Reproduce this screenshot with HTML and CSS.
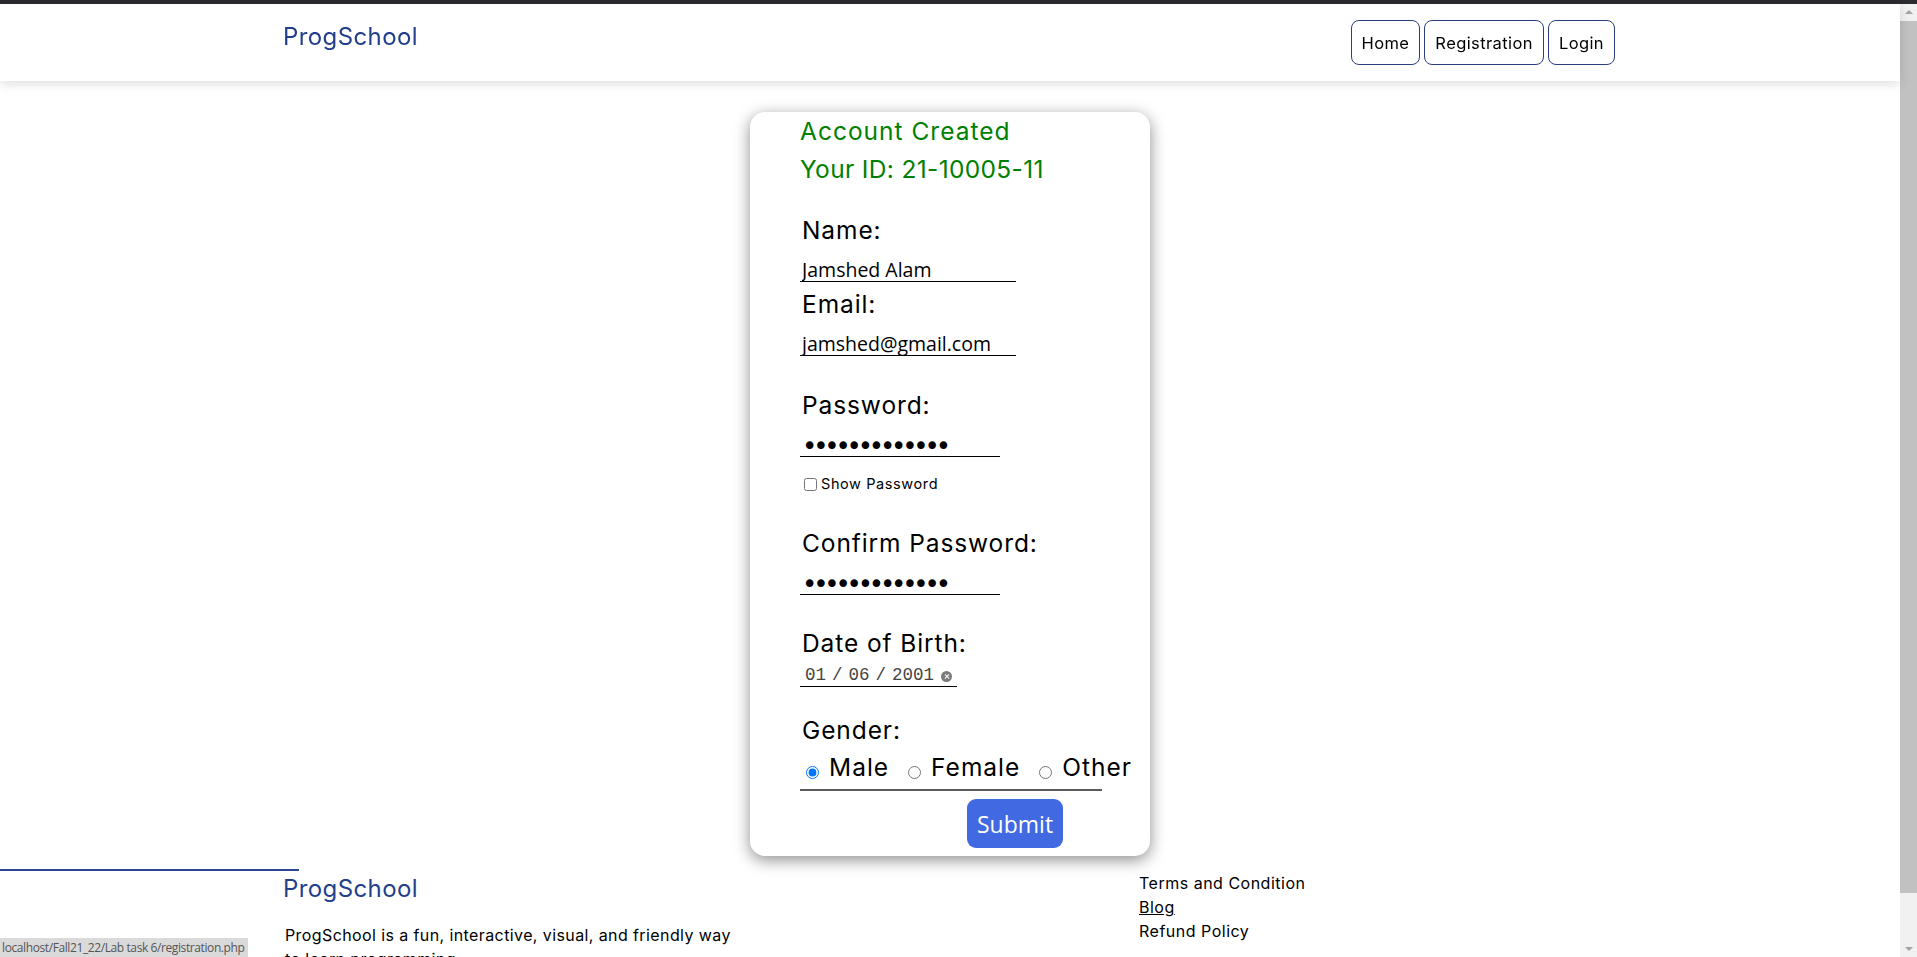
FILE: index.html
```html
<!DOCTYPE html>
<html lang="en">
<head>
<meta charset="utf-8">
<title>Registration - ProgSchool</title>
<link rel="stylesheet" href="styles.css">
</head>
<body>
<div class="frame-top"></div>
<div class="page">
  <header class="site-header">
    <div class="container header-inner">
      <div class="logo">ProgSchool</div>
      <nav class="nav">
        <a class="nav-btn" href="#">Home</a>
        <a class="nav-btn" href="#">Registration</a>
        <a class="nav-btn" href="#">Login</a>
      </nav>
    </div>
  </header>

  <main class="main">
    <form class="card">
      <div class="msg">Account Created</div>
      <div class="msg msg-id">Your ID: 21-10005-11</div>

      <label class="lbl lbl-first">Name:</label>
      <input class="txt" type="text" value="Jamshed Alam">

      <label class="lbl lbl-email">Email:</label>
      <input class="txt" type="text" value="jamshed@gmail.com">

      <label class="lbl lbl-gap">Password:</label>
      <input class="txt pwd" type="password" value="abcdefghijklm">

      <div class="show-row">
        <input class="chk" type="checkbox">
        <span>Show Password</span>
      </div>

      <label class="lbl lbl-gap">Confirm Password:</label>
      <input class="txt pwd" type="password" value="abcdefghijklm">

      <label class="lbl lbl-date">Date of Birth:</label>
      <div class="date">
        <span>01</span><span class="sep">/</span><span>06</span><span class="sep">/</span><span>2001</span>
        <span class="clear"></span>
      </div>

      <label class="lbl lbl-gender">Gender:</label>
      <div class="radio-row">
        <label class="opt"><input class="rad" type="radio" name="g" checked>Male</label>
        <label class="opt"><input class="rad" type="radio" name="g">Female</label>
        <label class="opt"><input class="rad" type="radio" name="g">Other</label>
      </div>

      <div class="submit-row">
        <button class="submit" type="button">Submit</button>
      </div>
    </form>
  </main>

  <div class="footer-rule"></div>
  <footer class="container footer">
    <div class="footer-left">
      <div class="footer-logo">ProgSchool</div>
      <p class="footer-text">ProgSchool is a fun, interactive, visual, and friendly way to learn programming</p>
    </div>
    <div class="footer-links">
      <a href="#">Terms and Condition</a>
      <a href="#" class="u">Blog</a>
      <a href="#">Refund Policy</a>
    </div>
  </footer>
</div>

<div class="scrollbar">
  <div class="sb-arrow sb-up"></div>
  <div class="sb-thumb"></div>
  <div class="sb-arrow sb-down"></div>
</div>
<div class="status">localhost/Fall21_22/Lab task 6/registration.php</div>
</body>
</html>
```
FILE: styles.css
```css
html, body {
  margin: 0;
  padding: 0;
  overflow: hidden;
  background: #fff;
}
body {
  font-family: "Inter", "Liberation Sans", sans-serif;
  color: #000;
}
.frame-top {
  height: 4px;
  background: #2a2b2e;
}
.page {
  width: 1900px;
}
.container {
  width: 70%;
  margin: 0 auto;
}

/* header */
.site-header {
  background: #fff;
  height: 77px;
  box-shadow: 0 3px 10px rgba(0, 0, 0, 0.13);
  position: relative;
  z-index: 1;
}
.header-inner {
  display: flex;
  justify-content: space-between;
  align-items: flex-start;
}
.logo {
  margin-top: 18px;
  margin-left: -2px;
  font-size: 24px;
  line-height: 30px;
  letter-spacing: 0.4px;
  color: #233f8c;
}
.nav {
  margin-top: 16px;
  display: flex;
  gap: 4px;
}
.nav-btn {
  display: flex;
  align-items: center;
  height: 43px;
  padding: 0 10px;
  border: 1px solid #2b3f7f;
  border-radius: 8px;
  color: #000;
  text-decoration: none;
  font-size: 16.5px;
  letter-spacing: 0.4px;
}

/* card */
.main {
  padding-top: 31px;
}
.card {
  width: 400px;
  box-sizing: border-box;
  margin: 0 auto;
  padding: 0 0 8px 50px;
  background: #fff;
  border-radius: 15px;
  box-shadow: 0 4px 16px rgba(0, 0, 0, 0.45);
}
.msg {
  font-size: 24.5px;
  line-height: 38px;
  letter-spacing: 1px;
  color: #008000;
}
.msg-id {
  letter-spacing: 0.35px;
}
.lbl {
  display: block;
  font-size: 24.5px;
  line-height: 30px;
  letter-spacing: 0.9px;
  padding-left: 2px;
}
.lbl-first { margin-top: 27px; }
.lbl-email { margin-top: 7px; }
.lbl-gap { margin-top: 34px; }
.lbl-date { margin-top: 33px; }
.lbl-gender { margin-top: 28px; }

.txt {
  display: block;
  box-sizing: content-box;
  width: 214px;
  height: 24px;
  margin: 0;
  padding: 12px 0 0 2px;
  border: none;
  border-bottom: 1px solid #000;
  outline: none;
  background: transparent;
  font-family: "Open Sans", "Noto Sans", sans-serif;
  font-size: 19.5px;
  color: #000;
}
.pwd {
  width: 198px;
  height: 21px;
  padding-top: 15px;
  font-family: "DejaVu Sans", sans-serif;
  font-size: 26px;
  letter-spacing: -4.2px;
}

.show-row {
  margin-top: 17px;
  height: 20px;
  display: flex;
  align-items: center;
  font-size: 14.5px;
  line-height: 20px;
  letter-spacing: 0.6px;
}
.chk {
  width: 13px;
  height: 13px;
  margin: 0 4px 0 4px;
}

.date {
  box-sizing: content-box;
  width: 152px;
  height: 22px;
  padding: 6px 0 0 5px;
  border-bottom: 1px solid #000;
  display: flex;
  align-items: center;
  font-family: "Liberation Mono", monospace;
  font-size: 17.5px;
  line-height: 22px;
  color: #444;
}
.sep {
  padding: 0 6px;
}
.clear {
  width: 11px;
  height: 11px;
  margin-left: 7px;
  margin-top: 3px;
  border-radius: 50%;
  background: #7b7b7b;
  position: relative;
}
.clear::before,
.clear::after {
  content: "";
  position: absolute;
  left: 2.5px;
  top: 5px;
  width: 6px;
  height: 1.3px;
  background: #fff;
  transform: rotate(45deg);
}
.clear::after {
  transform: rotate(-45deg);
}

.radio-row {
  margin-top: 6px;
  width: 302px;
  height: 32px;
  padding-bottom: 6px;
  border-bottom: 2px solid #5a5a5a;
  display: flex;
  white-space: nowrap;
  font-size: 24.5px;
  line-height: 32px;
  letter-spacing: 1px;
}
.opt {
  flex-shrink: 0;
  margin-right: 13px;
}
.rad {
  width: 13px;
  height: 13px;
  margin: 0 10px 0 6px;
  vertical-align: -3px;
}

.submit-row {
  margin-top: 8px;
  padding-left: 167px;
}
.submit {
  height: 49px;
  padding: 0 10px;
  border: none;
  border-radius: 9px;
  background: #4169e1;
  color: #fff;
  font-family: "Open Sans", "Noto Sans", sans-serif;
  font-size: 23px;
  cursor: pointer;
}

/* footer */
.footer-rule {
  margin-top: 13px;
  width: 299px;
  height: 2px;
  background: #2b4695;
}
.footer {
  display: grid;
  grid-template-columns: 854px auto;
}
.footer-logo {
  margin-top: 3px;
  margin-left: -2px;
  font-size: 24px;
  line-height: 30px;
  letter-spacing: 0.4px;
  color: #233f8c;
}
.footer-text {
  margin: 19px 0 0;
  width: 455px;
  font-size: 16px;
  line-height: 24px;
  letter-spacing: 0.4px;
}
.footer-links {
  display: flex;
  flex-direction: column;
  align-items: flex-start;
  font-size: 16px;
  line-height: 24px;
  letter-spacing: 0.5px;
}
.footer-links a {
  color: #000;
  text-decoration: none;
}
.footer-links a.u {
  text-decoration: underline;
}

/* browser chrome overlays */
.scrollbar {
  position: fixed;
  top: 4px;
  right: 0;
  bottom: 0;
  width: 17px;
  background: #f1f1f1;
}
.sb-thumb {
  position: absolute;
  top: 17px;
  left: 0;
  right: 0;
  height: 872px;
  background: #c1c1c1;
}
.sb-arrow {
  position: absolute;
  left: 5px;
  width: 0;
  height: 0;
  border-left: 4px solid transparent;
  border-right: 4px solid transparent;
}
.sb-up {
  top: 6px;
  border-bottom: 4px solid #a3a3a3;
}
.sb-down {
  bottom: 6px;
  border-top: 4px solid #a3a3a3;
}
.status {
  position: fixed;
  left: 0;
  bottom: 0;
  height: 19px;
  padding: 0 4px 0 2px;
  background: #dadada;
  color: #555;
  font-family: "Open Sans", "Noto Sans", sans-serif;
  font-size: 12px;
  line-height: 19px;
  letter-spacing: -0.4px;
}
```
